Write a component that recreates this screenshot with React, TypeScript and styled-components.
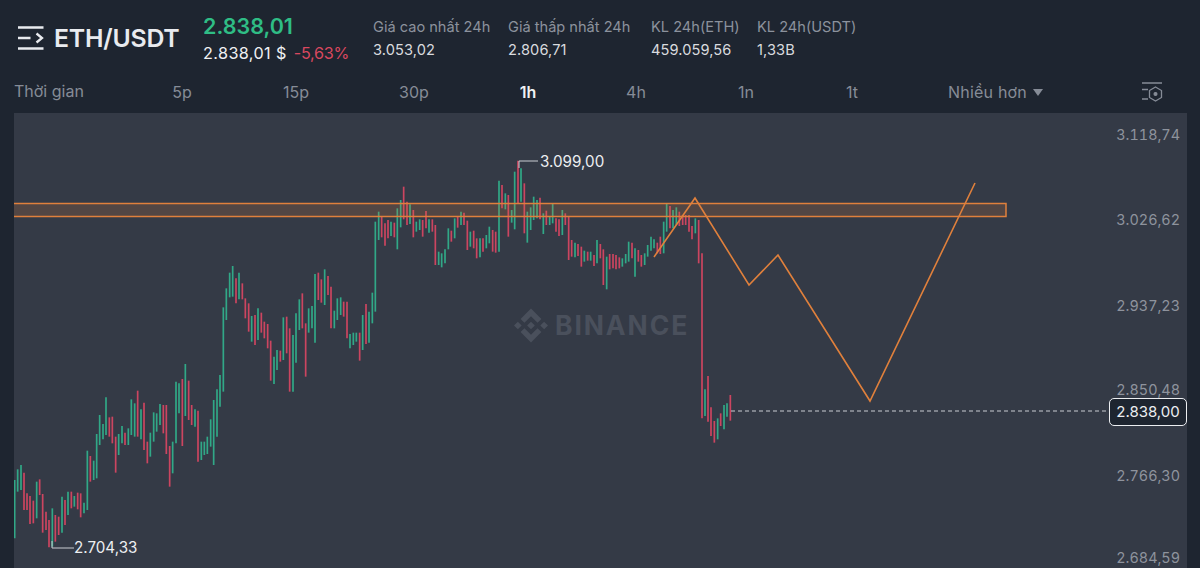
import React from "react";
import styled, { createGlobalStyle } from "styled-components";

const GREEN = "#31a887";
const RED = "#cc4560";
const ORANGE = "#e0803c";

const GlobalStyle = createGlobalStyle`
  html, body {
    margin: 0;
    height: 568px;
    overflow: hidden;
    background: #1e2530;
    font-family: "Inter", "Open Sans", sans-serif;
  }
`;

const Page = styled.div`
  width: 1200px;
  height: 568px;
  display: flex;
  flex-direction: column;
  background: #1e2530;
`;

const Header = styled.div`
  height: 71px;
  display: flex;
  align-items: flex-start;
`;

const Pair = styled.div`
  width: 203px;
  padding: 26px 0 0 18px;
  box-sizing: border-box;
  display: flex;
  align-items: center;
  gap: 10px;
`;

const Symbol = styled.span`
  font-size: 24.8px;
  line-height: 24px;
  font-weight: 600;
  color: #e9ebef;
  letter-spacing: -0.2px;
`;

const PriceBlock = styled.div`
  width: 170px;
  padding-top: 13px;
`;

const LastPrice = styled.div`
  font-size: 21.5px;
  line-height: 26px;
  font-weight: 600;
  color: #2fbd85;
`;

const SubPrice = styled.div`
  margin-top: 3px;
  font-size: 16.2px;
  line-height: 22px;
  color: #f0f1f3;
  display: flex;
  gap: 7px;
  letter-spacing: 0.4px;
`;

const Change = styled.span`
  color: #d9485f;
  letter-spacing: -0.3px;
`;

const Stat = styled.div<{ $w: number }>`
  width: ${(p) => p.$w}px;
  padding-top: 17px;
  font-size: 14.6px;
  line-height: 20px;
`;

const StatLabel = styled.div`
  color: #8c929d;
`;

const StatValue = styled.div`
  margin-top: 3px;
  color: #d9dbdf;
  letter-spacing: 0.1px;
`;

const Tabs = styled.div`
  height: 42px;
  display: grid;
  grid-template-columns: 113px 110px 118px 118px 110px 106px 114px 98px 47px 140px 53px 60px;
  padding-left: 14px;
  align-items: center;
  font-size: 16px;
  color: #868c97;
`;

const Tab = styled.div<{ $active?: boolean }>`
  text-align: center;
  color: ${(p) => (p.$active ? "#f0f1f3" : "#868c97")};
  font-weight: ${(p) => (p.$active ? 600 : 400)};
`;

const TimeLabel = styled.div`
  margin-top: -2px;
`;

const Spacer = styled.div``;

const More = styled.div`
  display: flex;
  align-items: center;
  gap: 6px;
  white-space: nowrap;
  letter-spacing: 0.2px;
`;

const Caret = styled.span`
  width: 0;
  height: 0;
  border-left: 5.5px solid transparent;
  border-right: 5.5px solid transparent;
  border-top: 7px solid #868c97;
`;

const Chart = styled.div`
  position: relative;
  margin-left: 14px;
  width: 1173px;
  height: 455px;
  background: #343a46;
  overflow: hidden;
`;

const Plot = styled.svg`
  position: absolute;
  inset: 0;
`;

const Axis = styled.div`
  position: absolute;
  top: 13px;
  right: 7px;
  display: grid;
  grid-template-rows: 85px 86px 84px 86px 82px 18px;
  font-size: 14.4px;
  line-height: 18px;
  font-variant-numeric: tabular-nums;
  color: #8e939d;
  text-align: right;
`;

const PriceTag = styled.div`
  position: absolute;
  top: 285px;
  right: 0;
  width: 78px;
  height: 28px;
  box-sizing: border-box;
  border: 1px solid #eceef1;
  border-radius: 5px;
  background: #1e2530;
  color: #eceef1;
  font-size: 15px;
  line-height: 26px;
  text-align: center;
`;

const Watermark = styled.div`
  position: absolute;
  left: 500px;
  top: 194px;
  display: flex;
  align-items: center;
  gap: 7px;
  color: #4a505c;
  font-size: 26.5px;
  line-height: 36px;
  font-weight: 700;
  letter-spacing: 1.9px;
`;

const Note = styled.div<{ $x: number; $y: number }>`
  position: absolute;
  left: ${(p) => p.$x}px;
  top: ${(p) => p.$y}px;
  font-size: 15.2px;
  line-height: 20px;
  color: #eceef1;
`;

type Bar = [number, number, number, 0 | 1]; // x, top, bottom, up

// leftmost stretch, read off at 3x: x, top, bottom, up
const left: [number, number, number, 0 | 1][] = [
  [44,900,1075,1],[53,868,935,1],[63,855,930,1],[72,878,990,0],[81,940,990,0],[90,948,1032,0],[100,962,1030,0],[110,905,1015,1],[119,898,945,0],[128,942,1058,0],
  [138,995,1050,0],[147,1020,1102,0],[157,985,1100,1],[166,1005,1085,0],[176,1010,1065,0],[186,950,1058,1],[195,960,1035,0],[204,935,1005,1],[214,935,985,0],[223,948,980,1],
  [233,938,988,0],[242,940,1012,0],[252,968,1000,1],[262,812,990,1],[271,828,905,0],[281,842,900,1],[290,762,895,1],[299,705,795,1],[309,732,778,1],[318,652,765,1],
  [328,712,770,0],[337,710,790,0],[347,770,878,0],[356,762,825,1],[366,738,790,1],[375,758,795,0],[385,745,795,1],[394,658,765,1],[404,670,770,1],[413,632,770,0],
  [423,688,778,1],[432,668,810,0],[442,785,850,0],[451,758,830,1],[461,697,785,1],[470,700,755,1],[480,672,735,1],[490,675,760,0],[499,675,822,0],[509,798,920,0],
  [518,785,880,1],[528,605,790,1],[537,610,700,1],[547,597,798,0],[556,552,708,1],[566,602,720,0],[575,675,735,0],[585,688,740,1],[594,692,845,0],[604,785,840,1],
  [613,785,825,1],[622,770,822,1],[632,718,800,1],[641,660,855,1],[651,628,770,1],[660,585,680,1],[670,382,635,1],[679,325,420,1],[689,278,352,1],[698,258,350,1],
  [708,295,370,0],[717,278,358,1],[727,310,358,0],[736,355,415,0],[746,370,455,0],[755,408,485,1],[765,405,495,0],[774,385,480,1],[784,398,458,0],[793,425,475,0],
  [803,432,505,0],[812,482,602,0],[822,530,612,1],[831,510,570,1],[841,512,545,0],[850,412,540,1],[860,410,520,0],[869,445,635,0],[879,465,635,1],[888,400,548,1],
  [898,358,450,1],[907,340,445,0],[917,430,590,0],[926,385,458,1],[936,378,445,1],[945,282,488,1],[955,278,360,0],[964,298,368,0],[974,268,375,1],[984,288,345,0],
  [993,320,445,0],[1003,392,445,1],[1012,355,420,1],[1022,352,405,1],[1031,365,410,0],[1041,365,475,0],[1050,462,505,1],[1060,458,495,1],[1069,458,485,1],[1079,458,542,0],
  [1088,405,510,1],[1098,372,492,0],[1107,395,488,1],[1117,338,430,1],[1126,125,395,1],
];

const middle: [number, number, number, 0 | 1][] = [
  [26,185,270,1],[35,200,262,0],[45,220,287,0],[54,210,265,0],[63,215,258,1],[73,218,262,0],[82,175,298,1],[92,150,232,1],[101,110,208,0],[111,155,225,0],
  [120,163,222,1],[130,180,262,0],[139,215,245,1],[149,208,240,1],[158,210,260,0],[168,183,235,0],[177,208,248,1],[187,208,245,0],[196,225,345,0],[206,305,345,1],
  [215,310,352,1],[225,298,340,1],[235,235,298,1],[244,242,275,0],[254,205,265,1],[263,200,233,0],[273,185,225,1],[282,188,225,0],[292,212,300,0],[301,245,290,1],
  [311,242,295,0],[320,265,325,0],[330,265,322,1],[339,265,305,0],[349,255,295,1],[358,230,280,1],[368,240,305,0],[377,245,308,0],[387,92,305,1],[396,105,175,0],
  [406,130,178,1],[415,135,260,0],[425,180,218,1],[434,65,238,1],[444,32,160,0],[453,55,155,1],[463,100,250,0],[472,185,278,1],[482,172,240,1],[491,140,210,1],
  [501,150,205,1],[510,143,208,0],[520,190,252,1],[529,182,225,0],[539,200,225,1],[548,162,220,1],[558,205,245,0],[567,208,258,0],[577,180,255,1],[586,190,225,0],
  [596,198,330,0],[605,270,320,0],[615,278,322,1],[624,282,318,0],[634,290,350,0],[643,302,335,1],[653,305,332,0],[662,305,332,1],[672,315,348,0],[681,270,340,1],
  [691,282,325,0],[700,298,405,0],[710,320,418,1],[719,312,358,0],[729,312,355,0],[738,315,358,0],[748,322,355,0],[757,325,350,1],[767,312,340,1],[776,275,335,1],
  [786,278,325,0],[795,295,380,1],[805,300,335,0],[814,315,350,0],[824,310,345,1],[833,285,320,1],[843,260,302,1],[852,268,295,1],[862,278,310,0],[871,260,312,0],
  [881,215,310,1],[890,160,245,1],[900,168,235,0],[909,180,235,1],[919,172,225,1],[928,185,228,0],[938,195,225,0],[947,195,225,0],[957,195,245,0],[966,228,268,0],
  [976,205,250,1],[986,210,340,0],
];

const right: [number, number, number, 0 | 1][] = [
  [666,-110,385,0],[675,298,378,1],[684,258,395,0],[693,352,438,0],[703,393,458,0],[713,385,448,1],[722,370,408,0],[732,345,418,1],[741,340,380,1],[751,315,392,0],
];

const toPage = (rows: Bar[], ox: number, oy: number): Bar[] =>
  rows.map(([x, t, b, up]) => [ox + x / 3, oy + t / 3, oy + b / 3, up]);

const bars: Bar[] = [
  ...toPage(left, 0, 180),
  ...toPage(middle, 370, 150),
  ...toPage(right, 480, 290),
];

const prices = ["3.118,74", "3.026,62", "2.937,23", "2.850,48", "2.766,30", "2.684,59"];
const stats = [
  { w: 135, label: "Giá cao nhất 24h", value: "3.053,02" },
  { w: 143, label: "Giá thấp nhất 24h", value: "2.806,71" },
  { w: 106, label: "KL 24h(ETH)", value: "459.059,56" },
  { w: 120, label: "KL 24h(USDT)", value: "1,33B" },
];
const frames = ["5p", "15p", "30p", "1h", "4h", "1n", "1t"];

const MenuIcon = () => (
  <svg width="26" height="24" viewBox="0 0 26 24" fill="none" stroke="#e9ebef" strokeWidth="2.3">
    <path d="M0 1.5h25.5M0 12h12.5M0 22.5h25.5" />
    <path d="M18.5 7.5l5.5 4.5-5.5 4.5" />
  </svg>
);

const SettingsIcon = () => (
  <svg width="22" height="20" viewBox="0 0 22 20" fill="none" stroke="#868c97" strokeWidth="1.3">
    <path d="M1 1h20M1 7.5h6M1 17h6" />
    <path d="M14.5 5l6 3.5v7l-6 3.5-6-3.5v-7z" />
    <circle cx="14.5" cy="12" r="1.4" fill="#868c97" />
  </svg>
);

const BinanceMark = () => (
  <svg width="34" height="35" viewBox="0 0 24 24" fill="#4a505c">
    <path d="M16.624 13.92l2.718 2.716-7.353 7.353-7.353-7.352 2.717-2.717 4.636 4.66 4.635-4.66zm4.637-4.637L24 12l-2.715 2.716L18.568 12l2.693-2.717zm-9.272.001l2.716 2.692-2.716 2.717L9.272 12l2.717-2.716zm-9.273-.001L5.409 12l-2.692 2.692L0 12l2.716-2.717zM11.989.012l7.353 7.329-2.718 2.715-4.635-4.636-4.636 4.66-2.717-2.715 7.353-7.353z" />
  </svg>
);

const App = () => {
  return (
    <Page>
      <GlobalStyle />
      <Header>
        <Pair>
          <MenuIcon />
          <Symbol>ETH/USDT</Symbol>
        </Pair>
        <PriceBlock>
          <LastPrice>2.838,01</LastPrice>
          <SubPrice>
            <span>2.838,01 $</span>
            <Change>-5,63%</Change>
          </SubPrice>
        </PriceBlock>
        {stats.map((s) => (
          <Stat key={s.label} $w={s.w}>
            <StatLabel>{s.label}</StatLabel>
            <StatValue>{s.value}</StatValue>
          </Stat>
        ))}
      </Header>

      <Tabs>
        <TimeLabel>Thời gian</TimeLabel>
        {frames.map((f) => (
          <Tab key={f} $active={f === "1h"}>
            {f}
          </Tab>
        ))}
        <Spacer />
        <More>
          Nhiều hơn <Caret />
        </More>
        <Spacer />
        <SettingsIcon />
      </Tabs>

      <Chart>
        <Plot width="1173" height="455" viewBox="14 113 1173 455">
          {bars.map(([x, t, b, up], i) => (
            <line key={i} x1={x} x2={x} y1={t} y2={b} stroke={up ? GREEN : RED} strokeWidth="1.7" />
          ))}
          <rect x="10" y="203.5" width="996" height="13" fill={ORANGE} fillOpacity="0.18" stroke={ORANGE} strokeWidth="1.5" />
          <polyline points="654,257 695,198 749,285 778,255 870,401 975,183" fill="none" stroke={ORANGE} strokeWidth="1.6" />
          <line x1="731" x2="1109" y1="411" y2="411" stroke="#c9ccd2" strokeWidth="1" strokeDasharray="4 3" />
          <path d="M519 168V161H538" fill="none" stroke="#c9ccd2" strokeWidth="1" />
          <path d="M52 541V548H74" fill="none" stroke="#c9ccd2" strokeWidth="1" />
        </Plot>
        <Watermark>
          <BinanceMark />
          BINANCE
        </Watermark>
        <Note $x={526} $y={39}>3.099,00</Note>
        <Note $x={60} $y={425}>2.704,33</Note>
        <Axis>
          {prices.map((p) => (
            <div key={p}>{p}</div>
          ))}
        </Axis>
        <PriceTag>2.838,00</PriceTag>
      </Chart>
    </Page>
  );
};

export default App;
